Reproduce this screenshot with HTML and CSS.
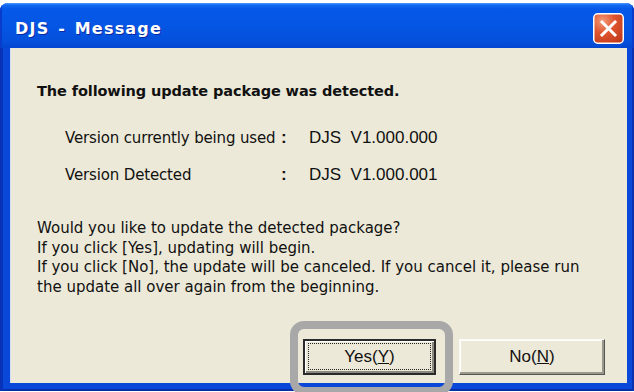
FILE: index.html
```html
<!DOCTYPE html>
<html>
<head>
<meta charset="utf-8">
<link rel="stylesheet" href="styles.css">
</head>
<body>
<div class="window">
  <div class="titlebar">
    <span class="title">DJS - Message</span>
    <svg class="close" width="31" height="31" viewBox="0 0 31 31">
      <defs>
        <radialGradient id="cg" cx="0.3" cy="0.25" r="0.9">
          <stop offset="0" stop-color="#f29a78"/>
          <stop offset="0.45" stop-color="#e0552f"/>
          <stop offset="1" stop-color="#c0391a"/>
        </radialGradient>
      </defs>
      <rect x="0.75" y="0.75" width="29.5" height="29.5" rx="4" fill="url(#cg)" stroke="#ffffff" stroke-width="1.5"/>
      <path d="M9 9 L22 22 M22 9 L9 22" stroke="#ffffff" stroke-width="3" stroke-linecap="square"/>
    </svg>
  </div>
  <div class="frame">
    <div class="client">
      <p class="heading">The following update package was detected.</p>
      <div class="versions">
        <div class="vrow"><span class="vlabel">Version currently being used</span><span class="vcolon">:</span><span class="vvalue">DJS&nbsp;&nbsp;V1.000.000</span></div>
        <div class="vrow"><span class="vlabel">Version Detected</span><span class="vcolon">:</span><span class="vvalue">DJS&nbsp;&nbsp;V1.000.001</span></div>
      </div>
      <p class="message">Would you like to update the detected package?<br>If you click [Yes], updating will begin.<br>If you click [No], the update will be canceled. If you cancel it, please run<br>the update all over again from the beginning.</p>
      <div class="buttons">
        <button class="btn btn-default"><span class="focus">Yes(<u>Y</u>)</span></button>
        <button class="btn btn-no">No(<u>N</u>)</button>
      </div>
    </div>
  </div>
</div>
<div class="highlight"></div>
</body>
</html>
```

FILE: styles.css
```css
html, body {
  margin: 0;
  padding: 0;
  background: #ffffff;
}
body {
  width: 634px;
  height: 392px;
  overflow: hidden;
  position: relative;
}
.window {
  margin-top: 3px;
  width: 634px;
  height: 388px;
  display: flex;
  flex-direction: column;
  border-radius: 8px 8px 0 0;
  overflow: hidden;
  background: #0b47d8;
}
.titlebar {
  height: 45px;
  box-sizing: border-box;
  display: flex;
  align-items: center;
  justify-content: space-between;
  padding: 5px 10px 0 15px;
  background: linear-gradient(to bottom, #4a9cff 0px, #1569f0 2px, #0558e8 6px, #0556e4 50%, #0450dc 85%, #0346cf 100%);
  box-shadow: inset 2px 0 0 #0a3ccc, inset -2px 0 0 #0a3ccc;
}
.title {
  font-family: "DejaVu Sans", sans-serif;
  font-weight: bold;
  font-size: 16px;
  color: #ffffff;
  text-shadow: 1px 1px 0 #0c2aa0;
  letter-spacing: 1.2px;
  word-spacing: 2px;
}
.close {
  display: block;
}
.frame {
  flex: 1;
  display: flex;
  padding: 0 7px 8px 10px;
  background: #0a48d9;
  box-shadow: inset 3px 0 0 #0833b8, inset -2px 0 0 #0832b0, inset 0 -2px 0 #0730a8;
}
.client {
  flex: 1;
  background: #ece9d8;
  box-shadow: inset 1px 0 0 #cfe0f7;
  font-family: "DejaVu Sans", sans-serif;
  font-size: 15px;
  color: #111111;
  display: flex;
  flex-direction: column;
}
.heading {
  margin: 33px 0 0 27px;
  font-weight: bold;
  font-size: 14.5px;
  line-height: 20px;
  letter-spacing: -0.1px;
}
.versions {
  margin: 27px 0 0 55px;
  display: flex;
  flex-direction: column;
  gap: 17px;
}
.vrow {
  display: flex;
  line-height: 20px;
}
.vlabel {
  width: 216px;
  letter-spacing: -0.15px;
}
.vcolon {
  width: 28px;
  font-weight: bold;
  font-family: "Liberation Sans", sans-serif;
  font-size: 17px;
}
.vvalue {
  font-family: "Liberation Sans", sans-serif;
  font-size: 17px;
}
.message {
  margin: 34px 0 0 27px;
  line-height: 19.5px;
}
.buttons {
  margin: 42px 22px 0 0;
  display: flex;
  justify-content: flex-end;
  gap: 23px;
}
.btn {
  height: 36px;
  margin: 0;
  padding: 0;
  font-family: "Liberation Sans", sans-serif;
  font-size: 17px;
  color: #111111;
  background: #ece9d8;
  box-sizing: border-box;
  display: flex;
  align-items: center;
  justify-content: center;
}
.btn-default {
  width: 133px;
  border: 2px solid #2a2a2a;
  box-shadow: inset 1px 1px 0 #ffffff, inset -2px -2px 0 #8c8a80;
  padding: 2px 3px 3px 3px;
}
.focus {
  flex: 1;
  align-self: stretch;
  display: flex;
  align-items: center;
  justify-content: center;
  border: 1px dotted #222222;
}
.btn-no {
  width: 146px;
  border: 1px solid #f8f8f4;
  border-right-color: #555555;
  border-bottom-color: #555555;
  box-shadow: inset -2px -2px 0 #9a978b, inset 1px 1px 0 #ffffff;
}
.highlight {
  position: absolute;
  left: 290px;
  top: 321px;
  width: 163px;
  height: 74px;
  box-sizing: border-box;
  border: 8px solid #a8a8a8;
  border-radius: 14px;
}
```
